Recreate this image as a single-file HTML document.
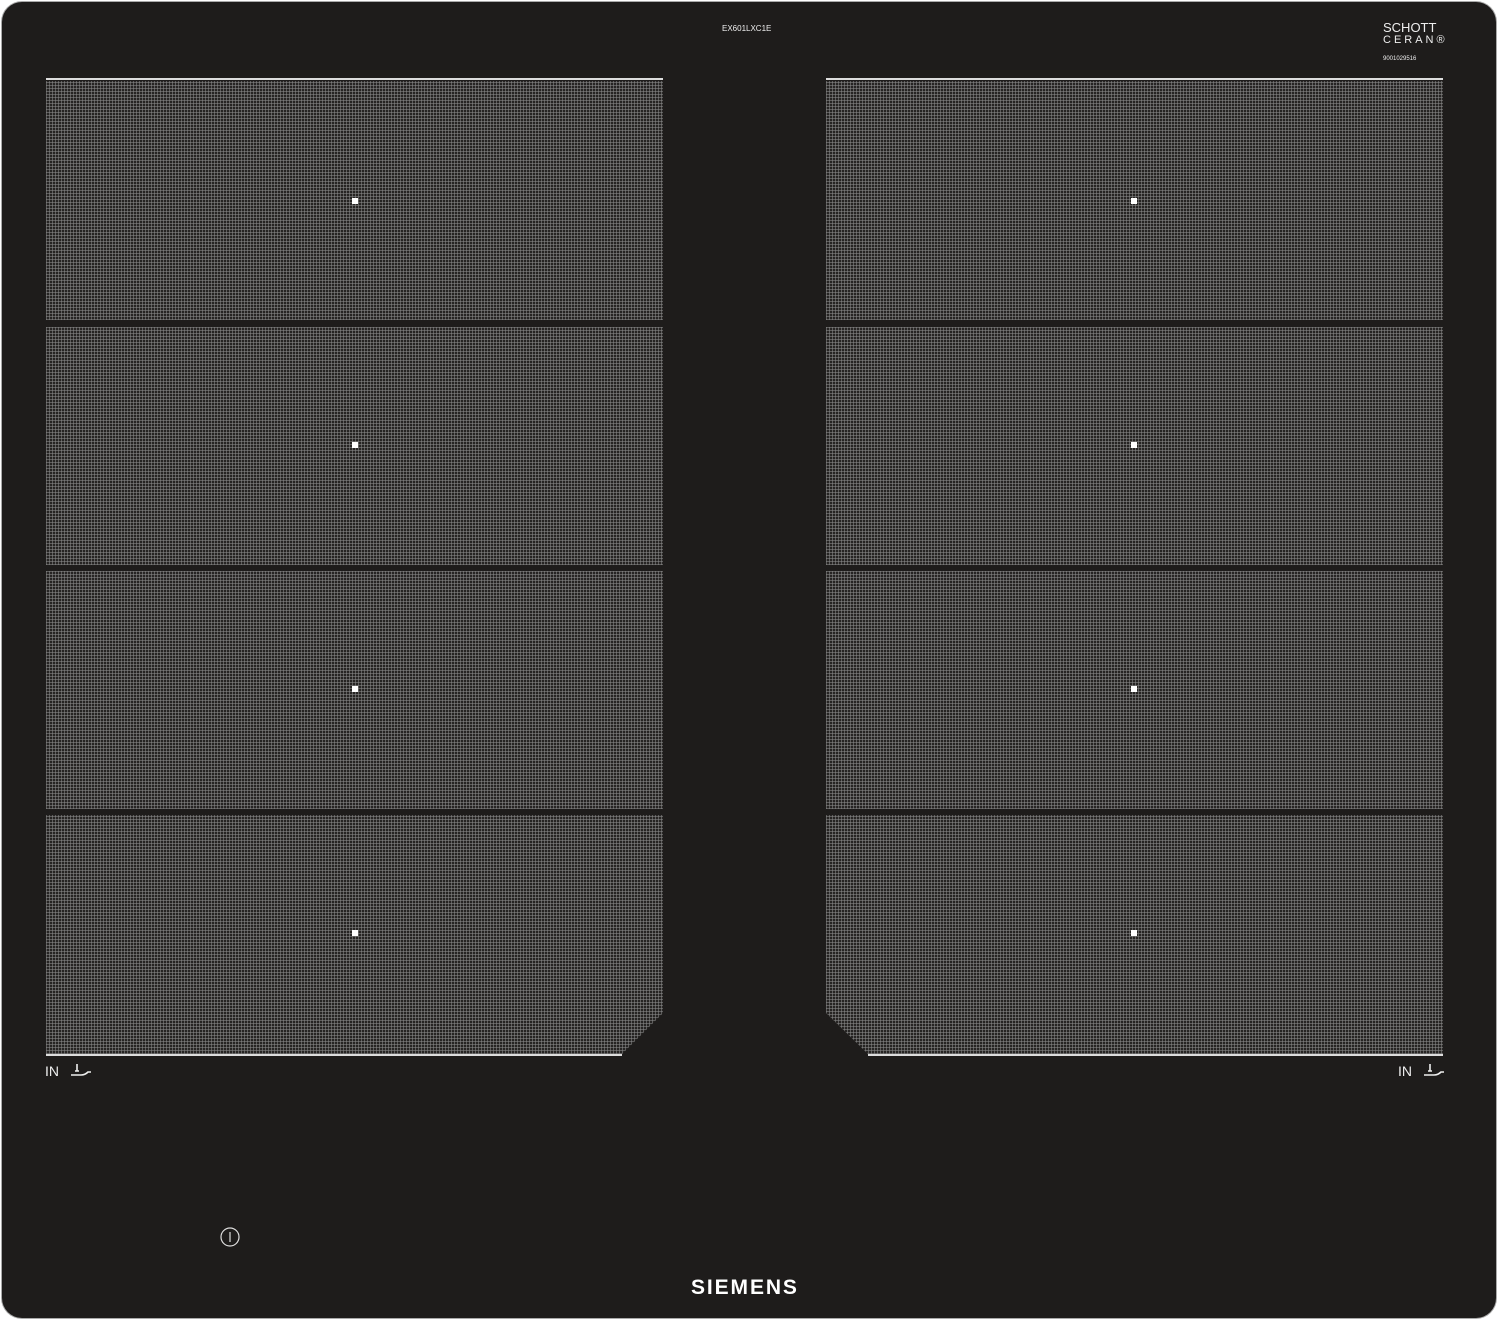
<!DOCTYPE html><html><head><style>
body{margin:0;width:1500px;height:1321px;background:#fff;position:relative;overflow:hidden;font-family:"Liberation Sans",sans-serif}
.body{position:absolute;left:2px;top:2px;width:1494px;height:1316px;background:#1e1c1b;border-radius:20px;box-shadow:0 0 0 1px #aaa}
.z{position:absolute;background-color:#262423;background-image:repeating-linear-gradient(90deg,rgba(140,140,140,.55) 0 1px,transparent 1px 3px),repeating-linear-gradient(0deg,rgba(140,140,140,.55) 0 1px,transparent 1px 3px)}
.d{position:absolute;width:6px;height:6px;background:#fff}
.l{position:absolute;height:2px;background:#ddd}
.t{position:absolute;color:#eee}
</style></head><body>
<div class="body"></div>
<div class="l" style="left:46px;top:78px;width:617px"></div>
<div class="l" style="left:826px;top:78px;width:617px"></div>
<div class="z" style="left:46px;top:81px;width:617px;height:239px"></div>
<div class="z" style="left:46px;top:327px;width:617px;height:238px"></div>
<div class="z" style="left:46px;top:571px;width:617px;height:238px"></div>
<div class="z" style="left:46px;top:815px;width:617px;height:239px;clip-path:polygon(0 0,100% 0,100% 198px,576px 100%,0 100%)"></div>
<div class="z" style="left:826px;top:81px;width:617px;height:239px"></div>
<div class="z" style="left:826px;top:327px;width:617px;height:238px"></div>
<div class="z" style="left:826px;top:571px;width:617px;height:238px"></div>
<div class="z" style="left:826px;top:815px;width:617px;height:239px;clip-path:polygon(0 0,100% 0,100% 100%,42px 100%,0 198px)"></div>
<div class="l" style="left:46px;top:1054px;width:576px"></div>
<div class="l" style="left:868px;top:1054px;width:575px"></div>
<div class="d" style="left:352px;top:198px"></div><div class="d" style="left:352px;top:442px"></div><div class="d" style="left:352px;top:686px"></div><div class="d" style="left:352px;top:930px"></div>
<div class="d" style="left:1131px;top:198px"></div><div class="d" style="left:1131px;top:442px"></div><div class="d" style="left:1131px;top:686px"></div><div class="d" style="left:1131px;top:930px"></div>
<div class="t" style="left:722px;top:24px;font-size:8px">EX601LXC1E</div>
<div class="t" style="left:1383px;top:22px;font-size:13px;line-height:11px">SCHOTT<br><span style="letter-spacing:3px;font-size:11px">CERAN®</span></div>
<div class="t" style="left:1383px;top:56px;font-size:6px">9001029516</div>
<div class="t" style="left:45px;top:1063px;font-size:14px">IN</div>
<svg style="position:absolute;left:69px;top:1063px" width="24" height="16" fill="none" stroke="#eee" stroke-width="1.6"><path d="M8 1v7M6 8h4M2 12h10q4 0 7-3h3"/></svg>
<div class="t" style="left:1398px;top:1063px;font-size:14px">IN</div>
<svg style="position:absolute;left:1422px;top:1063px" width="24" height="16" fill="none" stroke="#eee" stroke-width="1.6"><path d="M8 1v7M6 8h4M2 12h10q4 0 7-3h3"/></svg>
<svg style="position:absolute;left:219px;top:1226px" width="22" height="22" fill="none" stroke="#ddd" stroke-width="1.2"><circle cx="11" cy="11" r="9"/><path d="M11 6v10"/></svg>
<div class="t" style="left:691px;top:1276px;font-size:21px;font-weight:bold;letter-spacing:1.9px;color:#fff">SIEMENS</div>
</body></html>
